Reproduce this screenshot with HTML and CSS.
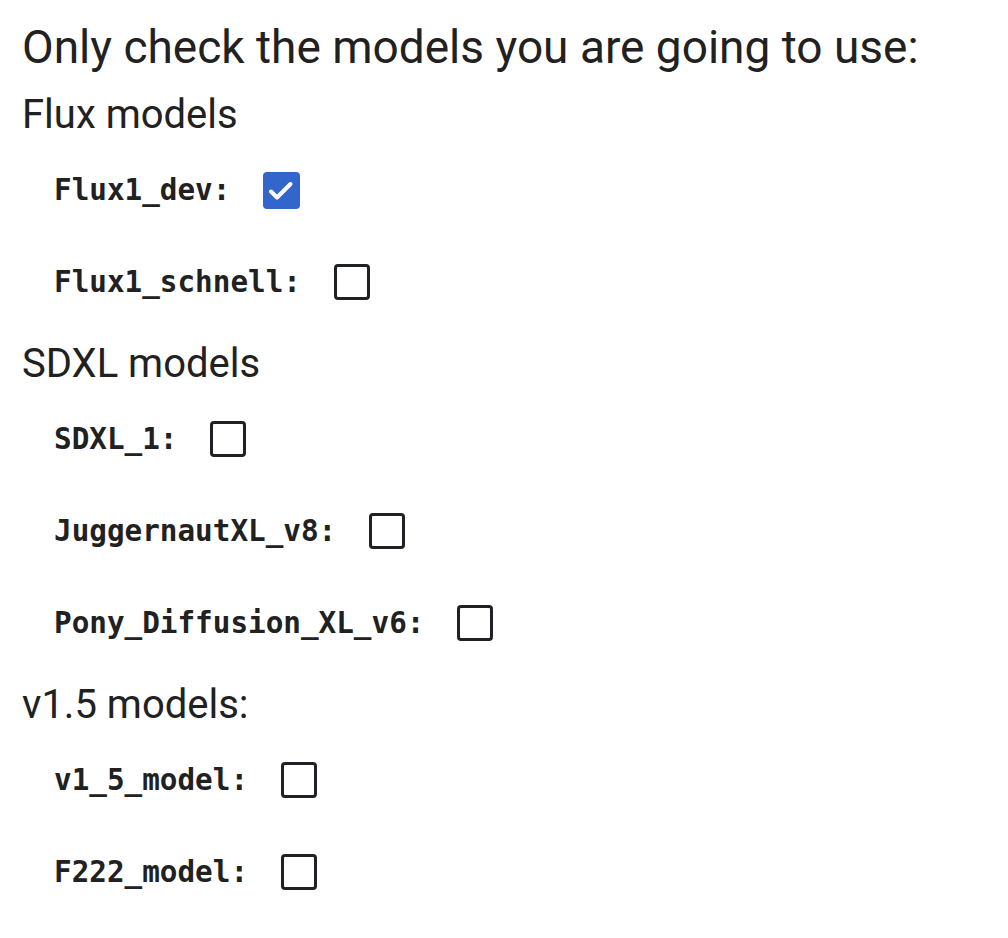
FILE: index.html
```html
<!DOCTYPE html>
<html>
<head>
<meta charset="utf-8">
<link rel="stylesheet" href="styles.css">
</head>
<body>
<div class="form">
  <div class="title">Only check the models you are going to use:</div>

  <div class="group">Flux models</div>
  <div class="row"><span class="label">Flux1_dev:</span><span class="box checked"><svg viewBox="0 0 37 37" width="37" height="37"><path d="M8 19.5 L14 25.5 L27.5 12" fill="none" stroke="#fff" stroke-width="4" stroke-linecap="round" stroke-linejoin="round"/></svg></span></div>
  <div class="row"><span class="label">Flux1_schnell:</span><span class="box"></span></div>

  <div class="group">SDXL models</div>
  <div class="row"><span class="label">SDXL_1:</span><span class="box"></span></div>
  <div class="row"><span class="label">JuggernautXL_v8:</span><span class="box"></span></div>
  <div class="row"><span class="label">Pony_Diffusion_XL_v6:</span><span class="box"></span></div>

  <div class="group">v1.5 models:</div>
  <div class="row"><span class="label">v1_5_model:</span><span class="box"></span></div>
  <div class="row"><span class="label">F222_model:</span><span class="box"></span></div>
</div>
</body>
</html>
```

FILE: styles.css
```css
html, body {
  margin: 0;
  padding: 0;
  background: #ffffff;
}

.form {
  padding: 16px 0 0 22px;
  font-family: Roboto, "Liberation Sans", sans-serif;
  color: #212121;
}

.title {
  font-size: 46px;
  line-height: 63px;
  white-space: nowrap;
}

.group {
  font-size: 40px;
  line-height: 59px;
  padding-top: 6px;
}

.row {
  height: 92px;
  display: flex;
  align-items: center;
  padding-left: 32px;
}

.label {
  font-family: "DejaVu Sans Mono", "Liberation Mono", monospace;
  font-weight: bold;
  font-size: 29.3px;
  color: #212121;
  white-space: pre;
}

.box {
  box-sizing: border-box;
  width: 36px;
  height: 36px;
  margin-left: 33px;
  border: 3px solid #202124;
  border-radius: 4px;
  display: flex;
  align-items: center;
  justify-content: center;
}

.box.checked {
  background: #3366cc;
  border: none;
  width: 37px;
  height: 37px;
}

.box svg {
  display: block;
  flex: none;
}
```
